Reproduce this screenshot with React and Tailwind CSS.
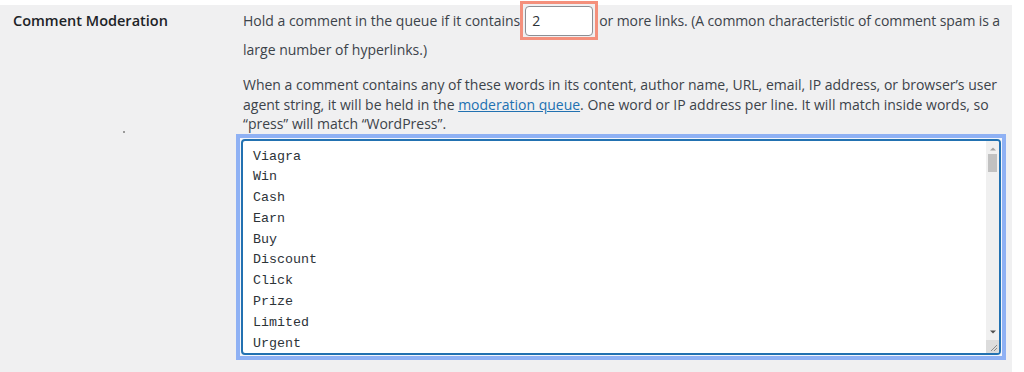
import React from "react";

const words = ["Viagra", "Win", "Cash", "Earn", "Buy", "Discount", "Click", "Prize", "Limited", "Urgent"];

export default function App() {
  return (
    <div className="w-[1024px] h-[372px] bg-white overflow-hidden text-[#3c434a]" style={{ fontFamily: '"Open Sans", "Noto Sans", sans-serif' }}>
      <div className="mt-[5px] w-[1012px] h-[367px] bg-[#f0f0f1] flex">
        <div className="w-[243px] shrink-0 pl-[13px] flex flex-col">
          <div className="mt-[6px] text-[14.5px] font-semibold leading-[20px] text-[#1d2327]">Comment Moderation</div>
          <div className="mt-[100px] ml-[110px] w-[2px] h-[2px] bg-[#9a9a9a]"></div>
        </div>
        <div className="flex-1 text-[14px]">
          <div className="-mt-[4px] h-[39px] flex items-center whitespace-nowrap">
            <span>Hold a comment in the queue if it contains</span>
            <span className="w-[78px] h-[39px] border-[3px] border-[#f4907c] flex items-center justify-center bg-[#f0f0f1]">
              <span className="w-[68px] h-[30px] bg-white border border-[#8c8f94] rounded-[4px] pl-[6px] flex items-center text-[#2c3338]">2</span>
            </span>
            <span className="ml-[1px] tracking-[-0.1px]">or more links. (A common characteristic of comment spam is a</span>
          </div>
          <div className="h-[20px] leading-[20px] whitespace-nowrap">large number of hyperlinks.)</div>
          <div className="mt-[15px] leading-[19.5px] whitespace-nowrap">
            <div>When a comment contains any of these words in its content, author name, URL, email, IP address, or browser’s user</div>
            <div>
              agent string, it will be held in the <span className="text-[#2271b1] underline">moderation queue</span>. One word or IP address per line. It will match inside words, so
            </div>
            <div>“press” will match “WordPress”.</div>
          </div>
          <div className="ml-[-7px] w-[770px] h-[226px] border-[4px] border-[#8fb1f4] p-[1px] bg-[#f4f6fb]">
            <div className="w-full h-full bg-white border-2 border-[#2271b1] rounded-[4px] flex overflow-hidden">
              <div className="flex-1 pl-[10px] pt-[6px] text-[13.33px] leading-[20.8px] text-[#2c3338]" style={{ fontFamily: '"Liberation Mono", "DejaVu Sans Mono", monospace' }}>
                {words.map((w) => (
                  <div key={w}>{w}</div>
                ))}
              </div>
              <div className="w-[13px] bg-[#f0f0f0] flex flex-col items-center">
                <svg width="8" height="6" viewBox="0 0 8 6" className="mt-[5px]"><path d="M1 4.5 L4 1.5 L7 4.5 Z" fill="#a3a3a3" /></svg>
                <div className="mt-[2px] w-[9px] h-[18px] bg-[#c1c1c1]"></div>
                <div className="flex-1"></div>
                <svg width="8" height="6" viewBox="0 0 8 6" className="mb-[5px]"><path d="M1 1.5 L4 4.5 L7 1.5 Z" fill="#505050" /></svg>
                <div className="w-[13px] h-[13px] bg-[#dcdcdc] relative">
                  <svg width="13" height="13" viewBox="0 0 13 13" className="absolute inset-0"><path d="M11 5 L5 11 M11 8 L8 11" stroke="#8a8a8a" strokeWidth="1" /></svg>
                </div>
              </div>
            </div>
          </div>
        </div>
      </div>
    </div>
  );
}
